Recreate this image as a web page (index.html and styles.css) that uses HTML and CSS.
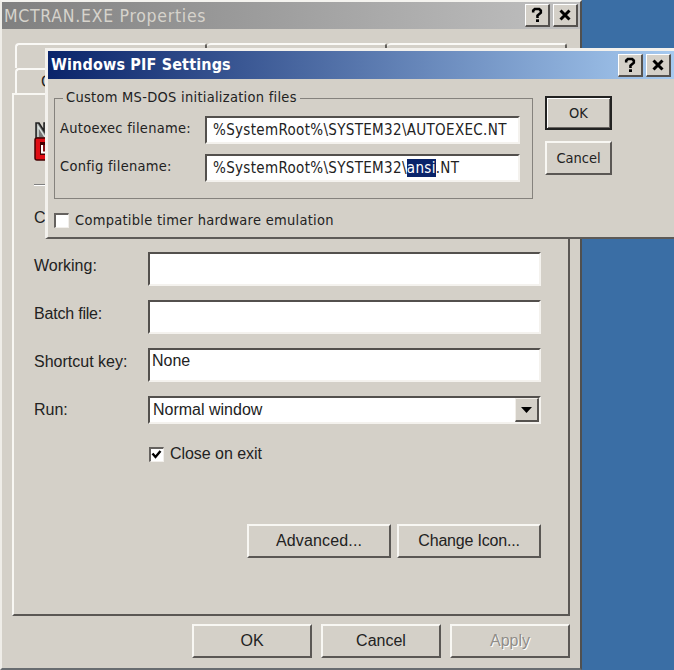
FILE: index.html
```
<!DOCTYPE html>
<html lang="en">
<head>
<meta charset="utf-8">
<title>MCTRAN.EXE Properties</title>
<link rel="stylesheet" href="styles.css">
</head>
<body>
<main class="window">
  <header class="titlebar">
    <h1 class="title t-main">MCTRAN.EXE Properties</h1>
    <button class="cap"><svg width="14" height="18" viewBox="0 0 14 18"><path d="M3.200 6.500V4.500L4.800 3h4.400l1.600 1.500v2.200L7.500 9.500V12" class="q"/><path d="M6 13.300h3V16H6z"/></svg></button>
    <button class="cap"><svg width="14" height="18" viewBox="0 0 14 18"><path d="M2.500 4.500l9 9M11.500 4.500l-9 9" class="x"/></svg></button>
  </header>
  <div class="tabs">
    <div class="tab-row"><i class="tab first"></i><i class="tab"></i><i class="tab"></i></div>
    <div class="tab-row second"><span class="general">G</span></div>
  </div>
  <section class="page">
    <div class="program">
      <svg width="40" height="42" viewBox="0 0 40 42">
        <path d="M2 17V2h3l5 8V2h8v15" fill="#777" stroke="#222" stroke-width="1.500"/>
        <path d="M4 16V5l7 11" fill="none" stroke="#d8e0dc" stroke-width="1.500"/>
        <rect x="1" y="17" width="38" height="22" rx="2" fill="#e00d14" stroke="#400" stroke-width="1.500"/>
        <path d="M7.500 32.500v-10h7v10z" fill="#8b1015" stroke="#400" stroke-width="3"/>
        <path d="M8 24v7.500h6" fill="none" stroke="#fff" stroke-width="2"/>
      </svg>
    </div>
    <hr class="rule">
    <div class="row"><label>C</label><div class="field"></div></div>
    <div class="row"><label>Working:</label><div class="field"></div></div>
    <div class="row"><label class="tight">Batch file:</label><div class="field"></div></div>
    <div class="row"><label>Shortcut key:</label><div class="field"><span>None</span></div></div>
    <div class="row run"><label>Run:</label><div class="field select"><span>Normal window</span><b class="drop"><svg width="11" height="6" viewBox="0 0 11 6"><path d="M0 0h11L5.500 6z"/></svg></b></div></div>
    <div class="check-row"><i class="check"><svg width="11" height="11" viewBox="0 0 11 11"><path d="M1.500 4.500l3 3.500 5-6" class="tick"/></svg></i><span class="close">Close on exit</span></div>
    <div class="actions"><button class="btn adv">Advanced...</button><button class="btn chg">Change Icon...</button></div>
  </section>
  <footer class="footer"><button class="btn">OK</button><button class="btn">Cancel</button><button class="btn off">Apply</button></footer>
</main>
<section class="dialog">
  <header class="titlebar active">
    <h2 class="title">Windows PIF Settings</h2>
    <button class="cap"><svg width="14" height="18" viewBox="0 0 14 18"><path d="M3.200 6.500V4.500L4.800 3h4.400l1.600 1.500v2.200L7.500 9.500V12" class="q"/><path d="M6 13.300h3V16H6z"/></svg></button>
    <button class="cap"><svg width="14" height="18" viewBox="0 0 14 18"><path d="M2.500 4.500l9 9M11.500 4.500l-9 9" class="x"/></svg></button>
  </header>
  <div class="dialog-body">
    <fieldset class="group">
      <legend>Custom MS-DOS initialization files</legend>
      <div class="grow"><label>Autoexec filename:</label><div class="input">%SystemRoot%\SYSTEM32\AUTOEXEC.NT</div></div>
      <div class="grow"><label>Config filename:</label><div class="input">%SystemRoot%\SYSTEM32\<mark>ansi</mark>.NT</div></div>
    </fieldset>
    <div class="side"><button class="btn default">OK</button><button class="btn">Cancel</button></div>
  </div>
  <div class="compat"><i class="check"></i><span>Compatible timer hardware emulation</span></div>
</section>
</body>
</html>
```
FILE: styles.css
```
* { box-sizing: border-box; }
body {
  margin: 0; width: 674px; height: 670px; overflow: hidden; position: relative;
  background: #3a6ea5; color: #222;
  font: 16px/20px "Liberation Sans", Arial, sans-serif;
}
button { font: inherit; color: inherit; letter-spacing: inherit; padding: 0; margin: 0; border-radius: 0; }
label, span, h1, h2 { white-space: nowrap; }
.window {
  width: 582px; height: 670px; background: #d4d0c8;
  border-style: solid; border-width: 2px;
  border-color: #f4f3ef #505050 #686c70 #efede8;
  display: flex; flex-direction: column;
}
.titlebar {
  height: 27px; flex: none; display: flex; align-items: center; gap: 3px; padding: 0 2px;
  background: linear-gradient(90deg, #808080, #c0c0c0);
}
.title { flex: 1; margin: 0; font: 16px/26px "DejaVu Sans Condensed", "DejaVu Sans", sans-serif; color: #d6d3cc; }
.t-main { font-size: 17.5px; letter-spacing: 0.72px; }
.active { background: linear-gradient(90deg, #0a246a, #a6caf0); height: 28px; }
.active .title { color: #fff; font-weight: bold; letter-spacing: 0.15px; }
.cap {
  width: 25px; height: 23px; background: #d4d0c8; display: flex; align-items: center; justify-content: center;
  border-style: solid; border-width: 1px 2px 2px 1px; border-color: #fff #55524f #55524f #fff;
}
.q { fill: none; stroke: #000; stroke-width: 2.6; }
.x { fill: none; stroke: #000; stroke-width: 3; }
.tabs { height: 64px; flex: none; padding: 14px 13px 0 13px; }
.tab-row { display: flex; height: 25px; }
.tab { flex: 1; border-top: 2px solid #faf9f6; border-right: 2px solid #625f5b; border-radius: 4px 3px 0 0; }
.first { flex: none; width: 192px; border-left: 2px solid #faf9f6; }
.second { border-top: 2px solid #faf9f6; border-left: 2px solid #faf9f6; border-radius: 4px 0 0 0; }
.general { padding: 2px 0 0 24px; }
.page {
  margin: 0 0 0 10px; width: 558px; height: 523px; flex: none;
  border-style: solid; border-width: 2px; border-color: #f8f7f3 #5a5754 #5a5754 #f8f7f3;
  padding: 26px 27px 0 20px; display: flex; flex-direction: column;
}
.program { height: 63px; }
.rule { width: 507px; height: 2px; margin: 0 0 18px; border: 0; border-top: 1px solid #808080; border-bottom: 1px solid #fff; flex: none; }
.row { display: flex; height: 34px; margin-bottom: 14px; flex: none; }
.row label { width: 114px; padding-top: 4px; }
.row .tight { letter-spacing: -0.2px; }
.field {
  flex: 1; background: #fff; border-style: solid; border-width: 2px; border-color: #53504d #f4f2ee #f4f2ee #53504d;
  padding: 1px 2px; display: flex;
}
.run { height: 28px; margin-bottom: 22px; }
.select { padding: 0 0 0 3px; align-items: center; justify-content: space-between; }
.drop {
  width: 24px; height: 24px; display: flex; align-items: center; justify-content: center; background: #d4d0c8;
  border-style: solid; border-width: 1px 2px 2px 1px; border-color: #f1eee9 #55524f #55524f #f1eee9;
}
.check {
  width: 15px; height: 15px; background: #fff; display: flex; flex: none;
  border: solid; border-width: 2px 1px 1px 2px; border-color: #65625f #f2efeb #f2efeb #65625f;
}
.tick { fill: none; stroke: #000; stroke-width: 2.4; }
.check-row { display: flex; align-items: center; gap: 6px; height: 17px; margin-left: 115px; }
.close { letter-spacing: -0.05px; line-height: 18px; padding-bottom: 1px; }
.actions { display: flex; justify-content: flex-end; gap: 6px; margin-top: 61px; }
.btn {
  width: 120px; height: 34px; background: #d4d0c8; text-align: center;
  border-style: solid; border-width: 2px; border-color: #f8f7f3 #5a5754 #5a5754 #f8f7f3;
}
.adv, .chg { width: 144px; }
.adv { letter-spacing: 0.15px; }
.chg { letter-spacing: -0.2px; }
.footer { display: flex; justify-content: flex-end; gap: 9px; margin: 8px 10px 0 0; }
.off { color: #908d88; text-shadow: 1px 1px #fff; }
.dialog {
  position: absolute; left: 45px; top: 48px; width: 640px; height: 191px; background: #d4d0c8;
  border-style: solid; border-width: 3px 3px 2px; border-color: #f3f1ed #505050 #5d5a57 #f3f1ed;
  font: 14.5px/18px "DejaVu Sans Condensed", "DejaVu Sans", sans-serif; letter-spacing: 0.28px;
}
.dialog .titlebar { width: 626px; padding: 0 3px; }
.dialog-body { display: flex; padding: 11px 0 0 6px; gap: 12px; }
.group {
  margin: 0; width: 479px; height: 109px; padding: 10px 12px 0 5px; min-width: 0;
  border: 1px solid #85827d;
}
legend { padding: 0 3px; margin-left: 3px; height: 16px; line-height: 15px; }
.grow { display: flex; height: 28px; margin-bottom: 10px; }
.grow label { width: 145px; padding-top: 3px; }
.input {
  flex: 1; background: #fff; padding: 3px 6px; font-size: 15px; line-height: 18px; letter-spacing: 0.33px; white-space: nowrap;
  border-style: solid; border-width: 2px; border-color: #53504d #f4f2ee #f4f2ee #53504d;
}
mark { background: #0a246a; color: #fff; }
.side { display: flex; flex-direction: column; gap: 11px; padding-top: 6px; }
.side .btn { width: 67px; height: 34px; letter-spacing: 0; }
.side .default { border-color: #222; box-shadow: inset 1px 1px #fff, inset -1px -1px #6a6662; }
.compat { display: flex; align-items: center; gap: 6px; padding: 12px 0 0 6px; }
```
